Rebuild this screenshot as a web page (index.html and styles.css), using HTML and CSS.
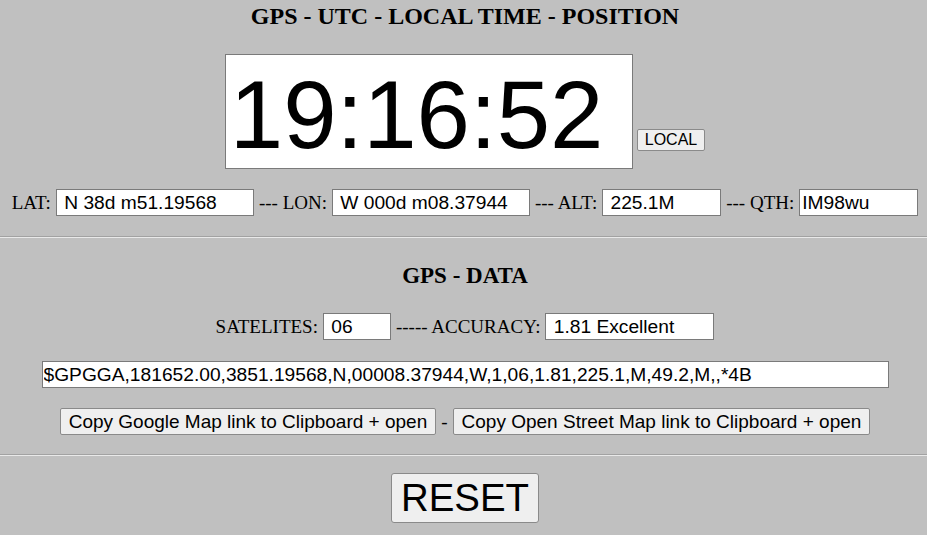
FILE: index.html
```html
<!DOCTYPE html>
<html lang="en">
<head>
  <meta charset="UTF-8">
  <meta name="viewport" content="width=device-width, initial-scale=1.0">
  <title>GPS - UTC - Local Time - Position</title>
  <link rel="stylesheet" href="styles.css">
</head>
<body>

<h2 class="title">GPS - UTC - LOCAL TIME - POSITION</h2>

<div class="clock-row">
  <input type="text" id="clock" class="clock" value="19:16:52">
  <button class="small-btn" id="modeBtn">LOCAL</button>
</div>

<div class="row">
  <span>LAT:</span>
  <input type="text" id="lat" class="field wide" value=" N 38d m51.19568">
  <span>--- LON:</span>
  <input type="text" id="lon" class="field wide" value=" W 000d m08.37944">
  <span>--- ALT:</span>
  <input type="text" id="alt" class="field narrow" value=" 225.1M">
  <span>--- QTH:</span>
  <input type="text" id="qth" class="field narrow" value="IM98wu">
</div>

<hr class="sep">

<h3 class="sub-title">GPS - DATA</h3>

<div class="row sat-row">
  <span>SATELITES:</span>
  <input type="text" id="sats" class="field sats" value=" 06">
  <span>----- ACCURACY:</span>
  <input type="text" id="hdop" class="field hdop" value=" 1.81 Excellent">
</div>

<div class="row nmea-row">
  <input type="text" id="nmea" class="field nmea" value="$GPGGA,181652.00,3851.19568,N,00008.37944,W,1,06,1.81,225.1,M,49.2,M,,*4B">
</div>

<div class="row link-row">
  <button class="link-btn" id="googleBtn">Copy Google Map link to Clipboard + open</button>
  <span>-</span>
  <button class="link-btn" id="osmBtn">Copy Open Street Map link to Clipboard + open</button>
</div>

<hr class="sep sep-low">

<div class="row reset-row">
  <button class="reset-btn" id="resetBtn">RESET</button>
</div>

</body>
</html>
```

FILE: styles.css
```css
body {
  margin: 0;
  padding-left: 3px;
  background-color: #c0c0c0;
  font-family: "Liberation Serif", "Times New Roman", serif;
  color: #000;
}
.title {
  margin: 0;
  padding-top: 2px;
  font-size: 24px;
  line-height: 28px;
  text-align: center;
}
.clock-row {
  display: flex;
  justify-content: center;
  align-items: flex-end;
  gap: 4px;
  margin-top: 24px;
}
.clock {
  box-sizing: border-box;
  width: 408px;
  height: 115px;
  padding: 6px 2px 0 4px;
  border: 1px solid #7a7a7a;
  background-color: #fff;
  font-family: "Liberation Sans", Arial, sans-serif;
  font-size: 96px;
  color: #000;
}
.small-btn {
  margin-bottom: 18px;
  padding: 1px 7px;
  border: 1px solid #8a8a8a;
  border-radius: 2px;
  background-color: #efefef;
  font-family: "Liberation Sans", Arial, sans-serif;
  font-size: 16px;
  color: #000;
}
.row {
  display: flex;
  justify-content: center;
  align-items: center;
  gap: 5px;
  margin-top: 20px;
  font-size: 19px;
}
.field {
  box-sizing: border-box;
  height: 27px;
  padding: 0 2px;
  border: 1px solid #7a7a7a;
  background-color: #fff;
  font-family: "Liberation Sans", Arial, sans-serif;
  font-size: 19.2px;
  color: #000;
}
.wide {
  width: 198px;
}
.narrow {
  width: 119px;
}
.sats {
  width: 68px;
}
.hdop {
  width: 169px;
}
.nmea {
  width: 847px;
  padding-left: 1px;
}
.sep {
  margin: 20px 0 0 -3px;
  height: 0;
  border: 0;
  border-top: 1px solid #a2a2a2;
  border-bottom: 1px solid #e9e9e9;
}
.sep-low {
  margin-top: 19px;
}
.sub-title {
  margin: 24px 0 0;
  font-size: 23px;
  line-height: 27px;
  text-align: center;
}
.sat-row {
  margin-top: 24px;
}
.nmea-row {
  margin-top: 21px;
}
.link-btn {
  box-sizing: border-box;
  height: 27px;
  padding: 0 8px;
  border: 1px solid #8a8a8a;
  border-radius: 2px;
  background-color: #efefef;
  font-family: "Liberation Sans", Arial, sans-serif;
  font-size: 19px;
  color: #000;
}
.reset-row {
  margin-top: 17px;
}
.reset-btn {
  box-sizing: border-box;
  height: 50px;
  padding: 0 9px;
  border: 1px solid #8a8a8a;
  border-radius: 3px;
  background-color: #efefef;
  font-family: "Liberation Sans", Arial, sans-serif;
  font-size: 38.4px;
  color: #000;
}
```
